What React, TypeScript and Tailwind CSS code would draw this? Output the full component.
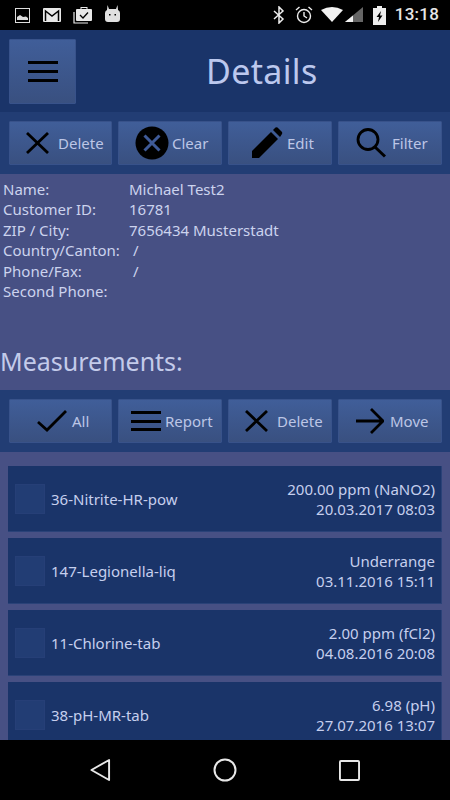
const font = { fontFamily: '"Noto Sans", sans-serif' };

function XIcon() {
  return (
    <svg viewBox="0 0 23 22" className="w-[23px] h-[22px] text-black" fill="none" stroke="currentColor" strokeWidth="2.800">
      <path d="M1 1 L22 21 M22 1 L1 21" />
    </svg>
  );
}

function ClearIcon() {
  return (
    <svg viewBox="0 0 34 34" className="w-[34px] h-[34px]">
      <circle cx="17" cy="17" r="16.5" fill="#000" />
      <path d="M9.5 9.5 L24.5 24.5 M24.5 9.5 L9.5 24.5" stroke="#3f5a97" strokeWidth="3" fill="none" />
    </svg>
  );
}

function PencilIcon() {
  return (
    <svg viewBox="0 0 32 32" className="w-8 h-8 text-black">
      <path d="M1 31 L1 24 L20 5 L27 12 L8 31 Z" fill="currentColor" />
      <path d="M22 3 L24.500 0.500 Q25.500 0 26.500 0.500 L31 5 Q31.500 6 31 7 L29 10 Z" fill="currentColor" />
    </svg>
  );
}

function SearchIcon() {
  return (
    <svg viewBox="0 0 30 30" className="w-[30px] h-[30px]" fill="none" stroke="#000" strokeWidth="2.800">
      <circle cx="12" cy="11.500" r="10" />
      <path d="M19 19 L29 28.500" strokeWidth="3" />
    </svg>
  );
}

function CheckIcon() {
  return (
    <svg viewBox="0 0 30 22" className="w-[30px] h-[22px]" fill="none" stroke="#000" strokeWidth="2.800">
      <path d="M1 12 L10 20 L29 1" />
    </svg>
  );
}

function ArrowIcon() {
  return (
    <svg viewBox="0 0 28 26" className="w-7 h-[26px]" fill="none" stroke="#000" strokeWidth="2.800">
      <path d="M0 13 H26 M15 1 L27 13 L15 25" />
    </svg>
  );
}

function BarsIcon({ className }: { className?: string }) {
  return (
    <div className={`flex flex-col justify-between ${className}`}>
      <div className="h-[3px] bg-black" />
      <div className="h-[3px] bg-black" />
      <div className="h-[3px] bg-black" />
    </div>
  );
}

function ToolButton({ icon, label, spacing }: { icon: React.ReactNode; label: string; spacing: string }) {
  return (
    <button
      type="button"
      className={`h-11 flex items-center ${spacing} rounded-[1px] bg-gradient-to-b from-[#405e99] to-[#395080] border border-[#38528a] text-[#bcc6e6] text-[15px]`}
    >
      {icon}
      <span>{label}</span>
    </button>
  );
}

function Toolbar({ children }: { children: React.ReactNode }) {
  return <div className="h-[62px] shrink-0 bg-[#223d74] pl-[9px] grid grid-cols-[103px_104px_104px_104px] gap-[6px] items-center">{children}</div>;
}

const details = [
  ["Name:", "Michael Test2"],
  ["Customer ID:", "16781"],
  ["ZIP / City:", "7656434 Musterstadt"],
  ["Country/Canton:", "\u00a0/"],
  ["Phone/Fax:", "\u00a0/"],
  ["Second Phone:", ""],
];

const measurements = [
  { name: "36-Nitrite-HR-pow", value: "200.00 ppm (NaNO2)", date: "20.03.2017 08:03" },
  { name: "147-Legionella-liq", value: "Underrange", date: "03.11.2016 15:11" },
  { name: "11-Chlorine-tab", value: "2.00 ppm (fCl2)", date: "04.08.2016 20:08" },
  { name: "38-pH-MR-tab", value: "6.98 (pH)", date: "27.07.2016 13:07" },
];

function StatusBar() {
  return (
    <div className="h-[30px] bg-black flex items-center pl-[15px] pr-[11px] text-[#e8e8e8] shrink-0">
      <svg viewBox="0 0 15 15" className="w-[15px] h-[15px]">
        <rect x="0.500" y="0.500" width="14" height="14" fill="none" stroke="#ddd" />
        <path d="M2 12 V9 L5 7 L8 9 L11 8.500 L13 10 V12 Z" fill="#ddd" />
      </svg>
      <svg viewBox="0 0 18 14" className="w-[18px] h-[14px] ml-[13px]">
        <rect width="18" height="14" rx="1" fill="#e8e8e8" />
        <path d="M2.500 13 V3 L9 8 L15.500 3 V13" fill="none" stroke="#000" strokeWidth="1.500" />
      </svg>
      <svg viewBox="0 0 19 17" className="w-[19px] h-[17px] ml-[12px]">
        <rect x="3" y="2" width="16" height="12" rx="1" fill="#e8e8e8" />
        <rect x="8" y="0.500" width="6" height="3" fill="none" stroke="#e8e8e8" />
        <path d="M7 8 L10 11 L15 5.500" fill="none" stroke="#000" strokeWidth="1.300" />
        <path d="M1 5 V16 H15" fill="none" stroke="#e8e8e8" strokeWidth="1.200" />
      </svg>
      <svg viewBox="0 0 15 17" className="w-[15px] h-[17px] ml-[13px] mb-[3px]">
        <path d="M2.500 0 L4 4 H11 L12.500 0 L13 5 Q15 6 15 8 V14 Q15 17 12 17 H3 Q0 17 0 14 V8 Q0 6 2 5 Z" fill="#e0e0e0" />
        <rect x="4" y="9" width="1.500" height="1.500" fill="#000" />
        <rect x="9.500" y="9" width="1.500" height="1.500" fill="#000" />
      </svg>

      <div className="ml-auto flex items-center">
        <svg viewBox="0 0 12 18" className="w-3 h-[18px]" fill="none" stroke="#eee" strokeWidth="1.500">
          <path d="M1 5 L10 13 L6 17 V1 L10 5 L1 13" />
        </svg>
        <svg viewBox="0 0 18 18" className="w-[18px] h-[18px] ml-[10px]" fill="none" stroke="#eee" strokeWidth="1.400">
          <circle cx="9" cy="10" r="6.500" />
          <path d="M9 6 V10 L12 12 M1 4 L4.500 1 M17 4 L13.500 1" />
        </svg>
        <svg viewBox="0 0 42 16" className="w-[42px] h-4 ml-[8px]">
          <path d="M0 3 Q11 -3 22 3 L11 15 Z" fill="#f2f2f2" />
          <path d="M24 15 L42 0 V15 Z" fill="#666" />
          <path d="M24 15 L32 8.500 V15 Z" fill="#f2f2f2" />
        </svg>
        <svg viewBox="0 0 13 19" className="w-[13px] h-[19px] ml-[10px]">
          <path d="M4 0 H9 V2 H13 V19 H0 V2 H4 Z" fill="#eee" />
          <path d="M8 5 L3.500 11 H6 L5 16 L9.500 9.500 H7 Z" fill="#000" />
        </svg>
        <span className="ml-[9px] text-[17px] font-medium text-[#e6e6e6] tracking-[0.2px]" style={{ fontFamily: "Roboto, sans-serif" }}>
          13:18
        </span>
      </div>
    </div>
  );
}

export default function App() {
  return (
    <div className="w-[450px] h-[800px] flex flex-col overflow-hidden bg-[#475084]" style={font}>
      <StatusBar />

      <div className="h-[82px] bg-[#1a3469] shrink-0 flex items-center pl-[9px]">
        <button
          type="button"
          className="w-[67px] h-[65px] flex items-center justify-center rounded-[1px] bg-gradient-to-b from-[#405e99] to-[#395080] border border-[#38528a]"
        >
          <BarsIcon className="w-[30px] h-[21px]" />
        </button>
        <h1 className="ml-[130px] text-[34px] leading-none text-[#bcc8ee] tracking-[0.35px]">Details</h1>
      </div>

      <Toolbar>
        <ToolButton icon={<XIcon />} label="Delete" spacing="pl-[16px] gap-[9px]" />
        <ToolButton icon={<ClearIcon />} label="Clear" spacing="pl-[16px] gap-[3px]" />
        <ToolButton icon={<PencilIcon />} label="Edit" spacing="pl-[22px] gap-[4px]" />
        <ToolButton icon={<SearchIcon />} label="Filter" spacing="pl-[17px] gap-[6px]" />
      </Toolbar>

      <div className="h-[216px] shrink-0 pt-[5px] text-[#ccd3ee] text-[15px] leading-[20.4px] flex flex-col">
        <div className="pl-[3px]">
          {details.map(([label, value]) => (
            <div key={label} className="flex">
              <span className="w-[126px] shrink-0">{label}</span>
              <span>{value}</span>
            </div>
          ))}
        </div>
        <h2 className="mt-auto mb-[15px] text-[25px] leading-7 text-[#c3cbea]">Measurements:</h2>
      </div>

      <Toolbar>
        <ToolButton icon={<CheckIcon />} label="All" spacing="pl-[27px] gap-[5px]" />
        <ToolButton icon={<BarsIcon className="w-[30px] h-5" />} label="Report" spacing="pl-[12px] gap-[4px]" />
        <ToolButton icon={<XIcon />} label="Delete" spacing="pl-[16px] gap-[9px]" />
        <ToolButton icon={<ArrowIcon />} label="Move" spacing="pl-[17px] gap-[6px]" />
      </Toolbar>

      <div className="flex-1 min-h-0 overflow-hidden pt-[14px] px-2 flex flex-col gap-[6px]">
        {measurements.map((m) => (
          <div key={m.name} className="h-[66px] shrink-0 bg-[#1a3469] border-b border-r border-[#2a4278] flex items-center pl-[7px] pr-[6px] text-[#c6cfee] text-[15px] leading-[20px]">
            <div className="w-[30px] h-[30px] bg-[#223d74] border border-[#263f77] shrink-0" />
            <span className="ml-[6px]">{m.name}</span>
            <div className="ml-auto text-right">
              <div>{m.value}</div>
              <div>{m.date}</div>
            </div>
          </div>
        ))}
      </div>

      <div className="h-[60px] bg-black shrink-0 flex items-center justify-center">
        <div className="w-[270px] flex items-center justify-between">
          <svg viewBox="0 0 22 24" className="w-[21px] h-6" fill="none" stroke="#e8e8e8" strokeWidth="2" strokeLinejoin="round">
            <path d="M20 1.500 V22.500 L1.500 12 Z" />
          </svg>
          <svg viewBox="0 0 24 24" className="w-6 h-6" fill="none" stroke="#e8e8e8" strokeWidth="2">
            <circle cx="12" cy="12" r="10.500" />
          </svg>
          <svg viewBox="0 0 22 22" className="w-[21px] h-[21px]" fill="none" stroke="#e8e8e8" strokeWidth="2" strokeLinejoin="round">
            <rect x="1" y="1" width="20" height="20" rx="1" />
          </svg>
        </div>
      </div>
    </div>
  );
}
